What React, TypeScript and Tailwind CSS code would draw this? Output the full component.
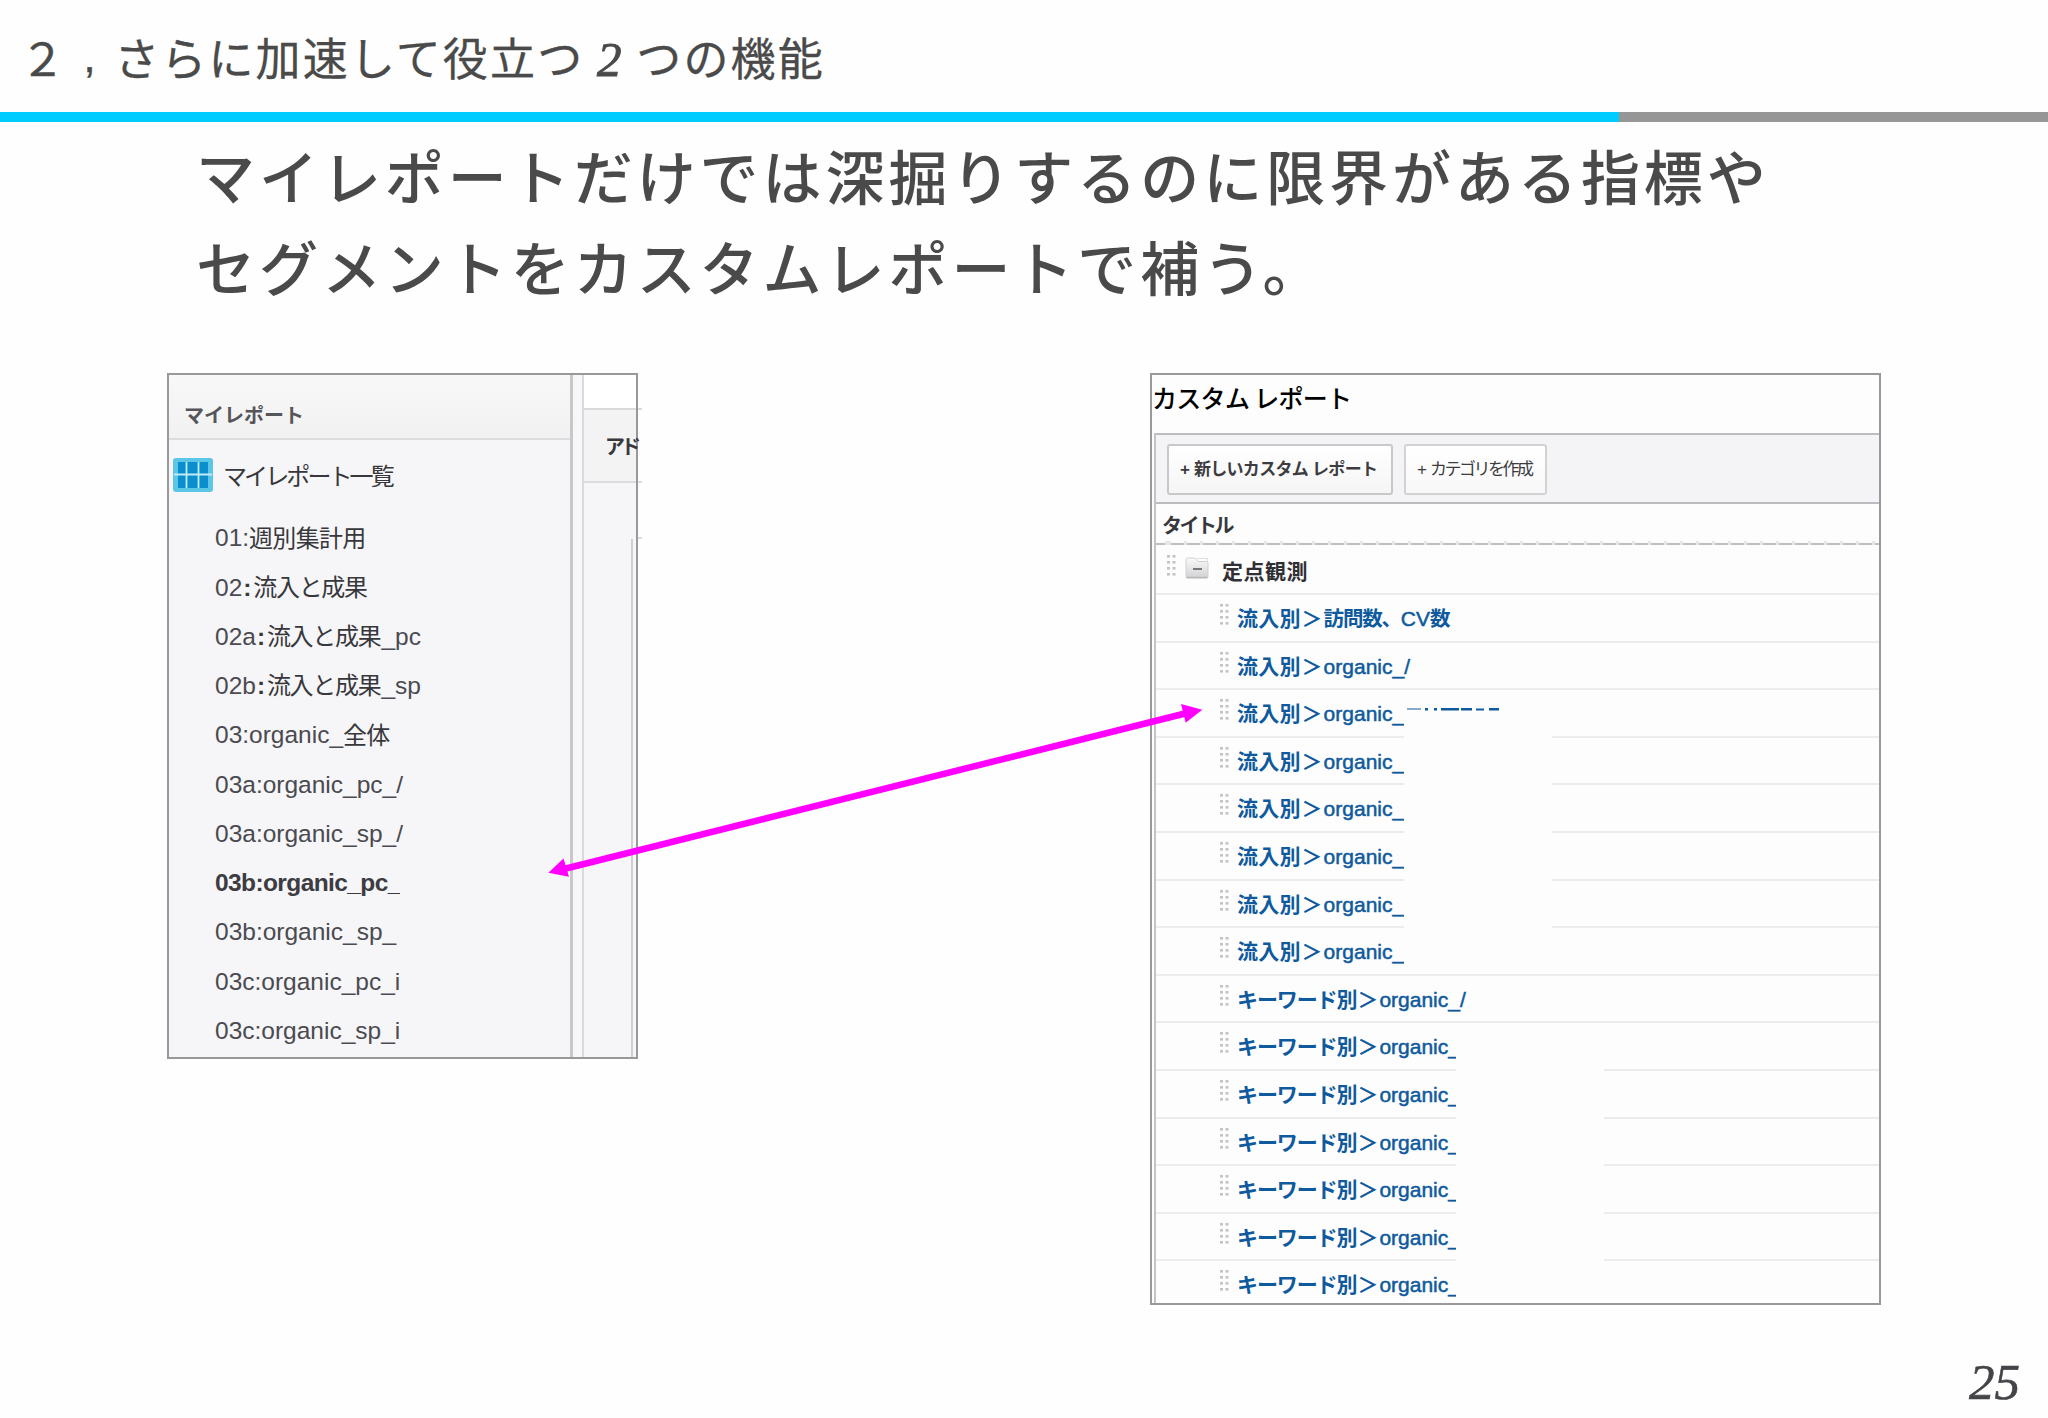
import clsx from "clsx";
import type { ReactNode } from "react";

const JP = "font-['Noto_Sans_CJK_JP',sans-serif]";
const MIXED = "font-['Liberation_Sans','Noto_Sans_CJK_JP',sans-serif]";

type MyReport = { code: string; sep?: boolean; jp?: string; tail?: string; active?: boolean };

const MY_REPORTS: MyReport[] = [
  { code: "01:", jp: "週別集計用" },
  { code: "02", sep: true, jp: "流入と成果" },
  { code: "02a", sep: true, jp: "流入と成果", tail: "_pc" },
  { code: "02b", sep: true, jp: "流入と成果", tail: "_sp" },
  { code: "03:organic_", jp: "全体" },
  { code: "03a:organic_pc_/" },
  { code: "03a:organic_sp_/" },
  { code: "03b:organic_pc_", active: true },
  { code: "03b:organic_sp_" },
  { code: "03c:organic_pc_i" },
  { code: "03c:organic_sp_i" },
];

type CustomReport = { kind: string; name: ReactNode };

const CUSTOM_REPORTS: CustomReport[] = [
  {
    kind: "流入別",
    name: (
      <>
        <b className="text-[20.500px] tracking-[-1.200px] [-webkit-text-stroke:0]">訪問数、</b>CV
        <b className="text-[20.500px] [-webkit-text-stroke:0]">数</b>
      </>
    ),
  },
  { kind: "流入別", name: "organic_/" },
  ...Array.from({ length: 6 }, () => ({ kind: "流入別", name: "organic_" })),
  { kind: "キーワード別", name: "organic_/" },
  ...Array.from({ length: 6 }, () => ({ kind: "キーワード別", name: "organic_" })),
];

const Grip = () => (
  <svg width="10" height="22" viewBox="0 0 10 22" className="shrink-0" fill="#c4c4c8">
    {[0, 6, 12, 18].map((y) => (
      <g key={y}>
        <rect x="0" y={y} width="3" height="2.6" />
        <rect x="5.5" y={y} width="3" height="2.6" />
      </g>
    ))}
  </svg>
);

const Folder = () => (
  <svg width="24" height="22" viewBox="0 0 24 22" className="shrink-0">
    <defs>
      <linearGradient id="folder" x1="0" y1="0" x2="0" y2="1">
        <stop offset="0" stopColor="#fafafa" />
        <stop offset="1" stopColor="#d2d2d4" />
      </linearGradient>
    </defs>
    <path d="M1 2.5Q1 1 2.500 1H10L13 4.500H21.500Q23 4.500 23 6V19.500Q23 21 21.500 21H2.500Q1 21 1 19.500Z" fill="url(#folder)" stroke="#d0d0d3" />
    <path d="M12 1.500H22.500V4" fill="none" stroke="#dedee0" />
    <path d="M1.500 20.500H22.500" stroke="#b9b9bc" strokeWidth="1.500" />
    <path d="M8 12H17" stroke="#77777b" strokeWidth="2" />
  </svg>
);

const GridIcon = () => (
  <svg width="40" height="34" viewBox="0 0 40 34" className="shrink-0">
    <rect width="40" height="34" rx="3" fill="#5cc6e6" />
    <rect x="5" y="4" width="30" height="26" fill="#0a8fce" />
    <path d="M13.500 4V30M25.500 4V30M1 16.500H39" stroke="#c2ecf8" strokeWidth="1.800" />
  </svg>
);

const MyReportPanel = () => (
  <section className="relative flex h-[686px] w-[471px] border-2 border-[#99999c] bg-[#f6f6f8]">
    <div className="flex w-[402px] flex-col">
      <h2
        className={clsx(
          JP,
          "flex h-[65px] items-center border-b-2 border-[#dcdcde] bg-linear-to-b from-[#f8f8f9] to-[#f1f1f2] pt-[17px] pl-[15px] text-[20px] leading-none font-bold text-[#55555a]",
        )}
      >
        マイレポート
      </h2>
      <div className="mt-[18px] flex items-center pl-[4px]">
        <GridIcon />
        <span className={clsx(JP, "ml-[10px] text-[24px] leading-[34px] tracking-[-2.900px] text-[#38383c]")}>
          マイレポート一覧
        </span>
      </div>
      <ul className="mt-[22px] pl-[46px] text-[24.500px] text-[#4a4a50]">
        {MY_REPORTS.map((report, i) => (
          <li
            key={i}
            className={clsx(
              MIXED,
              "flex h-[49.270px] items-center overflow-hidden whitespace-nowrap",
              i > 6 ? "w-[185px]" : "w-[300px]",
              report.active && "font-bold tracking-[-0.6px] text-[#3c3c42]",
            )}
          >
            <span>{report.code}</span>
            {report.sep && <b className="w-[11px] pl-px text-[#38383c]">:</b>}
            {report.jp && (
              <span
                className={clsx(
                  "text-[24px] text-[#38383c]",
                  report.sep ? "tracking-[-1.300px]" : "tracking-[-0.700px]",
                )}
              >
                {report.jp}
              </span>
            )}
            {report.tail && <span className="ml-px">{report.tail}</span>}
          </li>
        ))}
      </ul>
    </div>
    <div className="h-[682px] w-[14px] border-r-2 border-l-3 border-l-[#c8c8cb] border-r-[#dadadd] bg-[#f7f7f9]" />
    <div className="flex grow flex-col">
      <div className="h-[35px] border-b-2 border-[#dadadd] bg-white" />
      <div className="flex h-[73px] items-center border-b-2 border-[#dcdcdf] bg-[#f3f3f4] pl-[21px]">
        <b className={clsx(JP, "w-[31px] text-[20px] leading-7 tracking-[-4px] whitespace-nowrap text-[#38383c]")}>
          アド
        </b>
      </div>
      <div className="mt-[56px] w-[49px] grow border-r-2 border-[#d0d0d3]" />
    </div>
    {/* row borders running past the frame */}
    <div className="absolute top-[33px] left-[469px] h-[2px] w-[4px] bg-[#dadadd]" />
    <div className="absolute top-[106px] left-[469px] h-[2px] w-[4px] bg-[#dcdcdf]" />
    <div className="absolute top-[162px] left-[469px] h-[2px] w-[4px] bg-[#dcdcdf]" />
  </section>
);

const CustomReportPanel = () => (
  <section className="relative h-[932px] w-[731px] overflow-hidden border-2 border-[#99999c] bg-[#fdfdfe]">
    <h2 className={clsx(JP, "h-[58px] pt-[3px] text-[25px] leading-[38px] font-medium tracking-[-0.700px] text-black")}>
      カスタム レポート
    </h2>
    <div className="ml-[2px] border-l-2 border-[#c4c4c8]">
      <div className="flex h-[71px] gap-[11px] border-y-2 border-[#bdbdc1] bg-[#f4f4f6] py-[9px] pl-[11px]">
        <button className={clsx(MIXED, "flex h-[51px] w-[226px] items-center rounded-[3px] border-2 border-[#c8c8cb] bg-linear-to-b from-white to-[#f5f5f6] pl-[11px] text-[17px] font-bold whitespace-nowrap text-[#3c3c40]")}>
          <span className="mr-[4px]">+</span>
          <span className="tracking-[-0.700px]">新しいカスタム レポート</span>
        </button>
        <button className={clsx(MIXED, "flex h-[51px] w-[143px] items-center rounded-[3px] border-2 border-[#d2d2d5] bg-linear-to-b from-white to-[#f8f8f9] pl-[11px] text-[17px] whitespace-nowrap text-[#3c3c40]")}>
          <span className="mr-[3px]">+</span>
          <span className="tracking-[-2.500px]">カテゴリを作成</span>
        </button>
      </div>
      <div className="relative flex h-[41px] items-center border-b-2 border-[#bfbfc3] pt-[2px] pl-[6px]">
        <span className={clsx(JP, "text-[20px] leading-none font-bold tracking-[-2.500px] text-[#38383c]")}>タイトル</span>
        <div className="absolute inset-x-0 -bottom-[2px] h-[4px] bg-[repeating-linear-gradient(90deg,#e6e6e9_0,#e6e6e9_3px,transparent_3px,transparent_16px)] bg-position-[12px_0]" />
      </div>
      <div className="flex h-[50px] border-b-2 border-[#ececef] pl-[11px]">
        <div className="pt-[10px]">
          <Grip />
        </div>
        <div className="ml-[8px] pt-[12px]">
          <Folder />
        </div>
        <span className={clsx(JP, "ml-[13px] text-[21px] leading-[50px] font-bold tracking-[0.500px] text-[#303034]")}>
          定点観測
        </span>
      </div>
      {CUSTOM_REPORTS.map(({ kind, name }, i) => (
        <div key={i} className="flex h-[47.600px] border-b-2 border-[#ececef] pl-[64px]">
          <div className="pt-[9px]">
            <Grip />
          </div>
          <p className={clsx(MIXED, "ml-[7px] flex items-center pt-[2px] text-[21px] whitespace-nowrap text-[#0f5a9c]")}>
            <b className={kind === "流入別" ? "tracking-[0.200px]" : "tracking-[-1.100px]"}>{kind}</b>
            <b className="w-[23px] text-center">＞</b>
            <span className="[-webkit-text-stroke:0.500px]">{name}</span>
          </p>
        </div>
      ))}
    </div>
    {/* blanked-out report names */}
    <div className="absolute top-[333px] left-[252px] h-[258px] w-[148px] bg-[#fdfdfe]">
      <svg width="100" height="4" className="absolute top-0 left-[3px]" fill="#0f5a9c">
        <path d="M0 0.500H14V1.500H0ZM18 0H21V2.500H18ZM27 0H30V2.500H27ZM34 0H52V2.500H34ZM54 0H65V2.500H54ZM69 0.500H77V2.500H69ZM82 0H92V2.500H82Z" />
      </svg>
    </div>
    <div className="absolute top-[660px] left-[304px] h-[266px] w-[148px] bg-[#fdfdfe]" />
  </section>
);

export default function App() {
  return (
    <main className={clsx(JP, "relative flex h-[1418px] w-[2048px] flex-col overflow-hidden bg-[#fefefe] text-[#4a4a4a]")}>
      <header className="flex h-[112px] items-center pl-[20px] text-[45px] leading-none tracking-[2.150px] [-webkit-text-stroke:0.300px]">
        <span>２</span>
        <span className="w-[47px] text-center font-['Liberation_Sans',sans-serif]">,</span>
        <span>さらに加速して役立つ</span>
        <i className="w-[52px] pt-[6px] text-center font-['Liberation_Serif',serif] text-[49px] [-webkit-text-stroke:1px]">2</i>
        <span>つの機能</span>
      </header>
      <div className="flex h-[10px]">
        <div className="w-[1619px] bg-[#00ccff]" />
        <div className="grow bg-[#969696]" />
      </div>
      <h1 className="h-[251px] pt-[7px] pl-[196px] text-[59px] leading-[91px] font-medium tracking-[3.950px]">
        マイレポートだけでは深掘りするのに限界がある指標や
        <br />
        セグメントをカスタムレポートで補う。
      </h1>
      <div className="flex justify-between pr-[167px] pl-[167px]">
        <MyReportPanel />
        <CustomReportPanel />
      </div>
      <footer className="flex grow items-center justify-end pt-[41px] pr-[28px] font-['Liberation_Serif',serif] text-[51px] leading-none text-[#444448] italic [-webkit-text-stroke:0.600px]">
        25
      </footer>
      <svg className="absolute top-[690px] left-[540px]" width="670" height="200" viewBox="540 690 670 200" fill="#ff00ff">
        <path d="M564 869L1187 713" stroke="#ff00ff" strokeWidth="6.500" />
        <path d="M548.300 872.700L563.500 858.500L569 876.700Z" />
        <path d="M1202.300 709.700L1181 704L1185.700 722.700Z" />
      </svg>
    </main>
  );
}
